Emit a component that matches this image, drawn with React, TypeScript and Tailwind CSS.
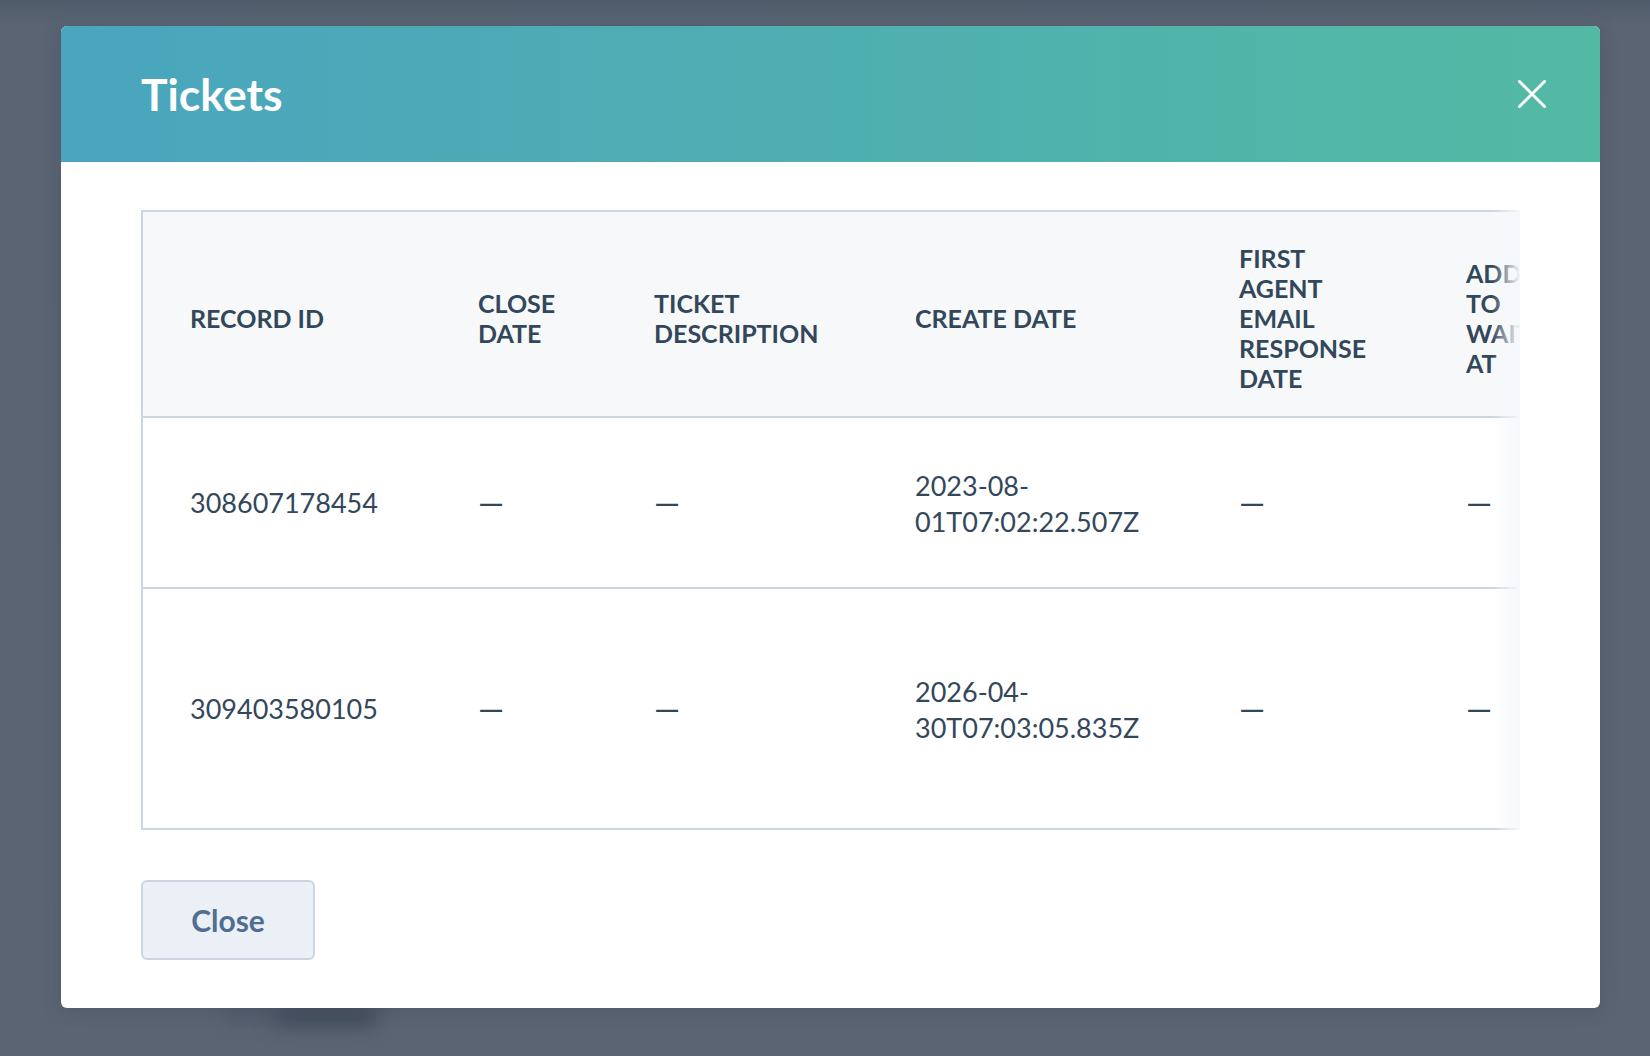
import React from "react";

const headers = [
  { w: "w-[335px]", lines: ["RECORD ID"] },
  { w: "w-[176px]", lines: ["CLOSE", "DATE"] },
  { w: "w-[261px]", lines: ["TICKET", "DESCRIPTION"] },
  { w: "w-[324px]", lines: ["CREATE DATE"] },
  { w: "w-[227px]", lines: ["FIRST", "AGENT", "EMAIL", "RESPONSE", "DATE"] },
  { w: "w-[300px]", lines: ["ADDED", "TO", "WAITING", "AT"] },
];

const rows = [
  { id: "308607178454", d1: "2023-08-", d2: "01T07:02:22.507Z", h: "h-[171px]" },
  { id: "309403580105", d1: "2026-04-", d2: "30T07:03:05.835Z", h: "h-[241px]" },
];

const font = "font-['Lato','Liberation_Sans',sans-serif]";

function Dash() {
  return <span className="text-[33px]">—</span>;
}

export default function App() {
  return (
    <div className={`relative h-[1056px] w-[1650px] overflow-hidden bg-[linear-gradient(to_bottom,#505c6b_0px,#5a6473_24px,#5b6473_100%)] pl-[61px] pt-[26px] ${font}`}>
      <div className="absolute left-[225px] top-[1000px] h-[24px] w-[50px] bg-[#525d6c] blur-[8px]" />
      <div className="absolute left-[274px] top-[1000px] h-[28px] w-[104px] rounded-md bg-[#444f5e] blur-[9px]" />
      <div className="relative flex h-[982px] w-[1539px] flex-col overflow-hidden rounded-[6px] bg-white shadow-[0_2px_16px_rgba(60,70,85,0.35)]">
        <header className="flex h-[136px] shrink-0 items-center justify-between bg-[linear-gradient(90deg,#4aa5be_0%,#53b9a3_100%)] pl-[80px] pr-[54px]">
          <h1 className="text-[44.5px] font-bold leading-[48px] text-white">Tickets</h1>
          <svg viewBox="0 0 28 28" className="h-[28px] w-[28px]" fill="none" stroke="white" strokeWidth="3" strokeLinecap="round">
            <path d="M1.5 1.5 26.5 26.5M26.5 1.5 1.5 26.5" />
          </svg>
        </header>
        <main className="flex flex-col items-start pl-[80px] pt-[48px]">
          <div className="relative h-[620px] w-[1379px] overflow-hidden border-l-2 border-[#cbd6e2]">
            <table className="w-[1623px] table-fixed border-collapse text-left text-[#33475b]">
              <colgroup>
                {headers.map((h) => (
                  <col key={h.lines[0]} className={h.w} />
                ))}
              </colgroup>
              <thead>
                <tr className="h-[206px] border-y-2 border-[#cbd6e2] bg-[#f6f8fa]">
                  {headers.map((h, i) => (
                    <th key={h.lines[0]} className={`pt-[7px] align-middle text-[25px] font-bold uppercase leading-[30px] ${i === 0 ? "pl-[47px]" : "pl-0"}`}>
                      {h.lines.map((l) => (
                        <div key={l}>{l}</div>
                      ))}
                    </th>
                  ))}
                </tr>
              </thead>
              <tbody>
                {rows.map((r) => (
                  <tr key={r.id} className={`${r.h} border-b-2 border-[#cbd6e2] text-[27px] font-normal leading-[36px]`}>
                    <td className="pl-[47px]">{r.id}</td>
                    <td className="pt-[2px]"><Dash /></td>
                    <td className="pt-[2px]"><Dash /></td>
                    <td className="pt-[2px]">
                      <div>{r.d1}</div>
                      <div>{r.d2}</div>
                    </td>
                    <td className="pt-[2px]"><Dash /></td>
                    <td className="pt-[2px]"><Dash /></td>
                  </tr>
                ))}
              </tbody>
            </table>
            <div className="absolute inset-y-0 right-0 w-[28px] bg-[linear-gradient(90deg,rgba(246,248,251,0)_0%,rgba(246,248,251,1)_100%)]" />
          </div>
          <button className="mt-[50px] h-[80px] w-[174px] rounded-[6px] border-2 border-[#cbd6e2] bg-[#eaf0f6] text-[30px] font-bold text-[#506e91]">
            Close
          </button>
        </main>
      </div>
    </div>
  );
}
